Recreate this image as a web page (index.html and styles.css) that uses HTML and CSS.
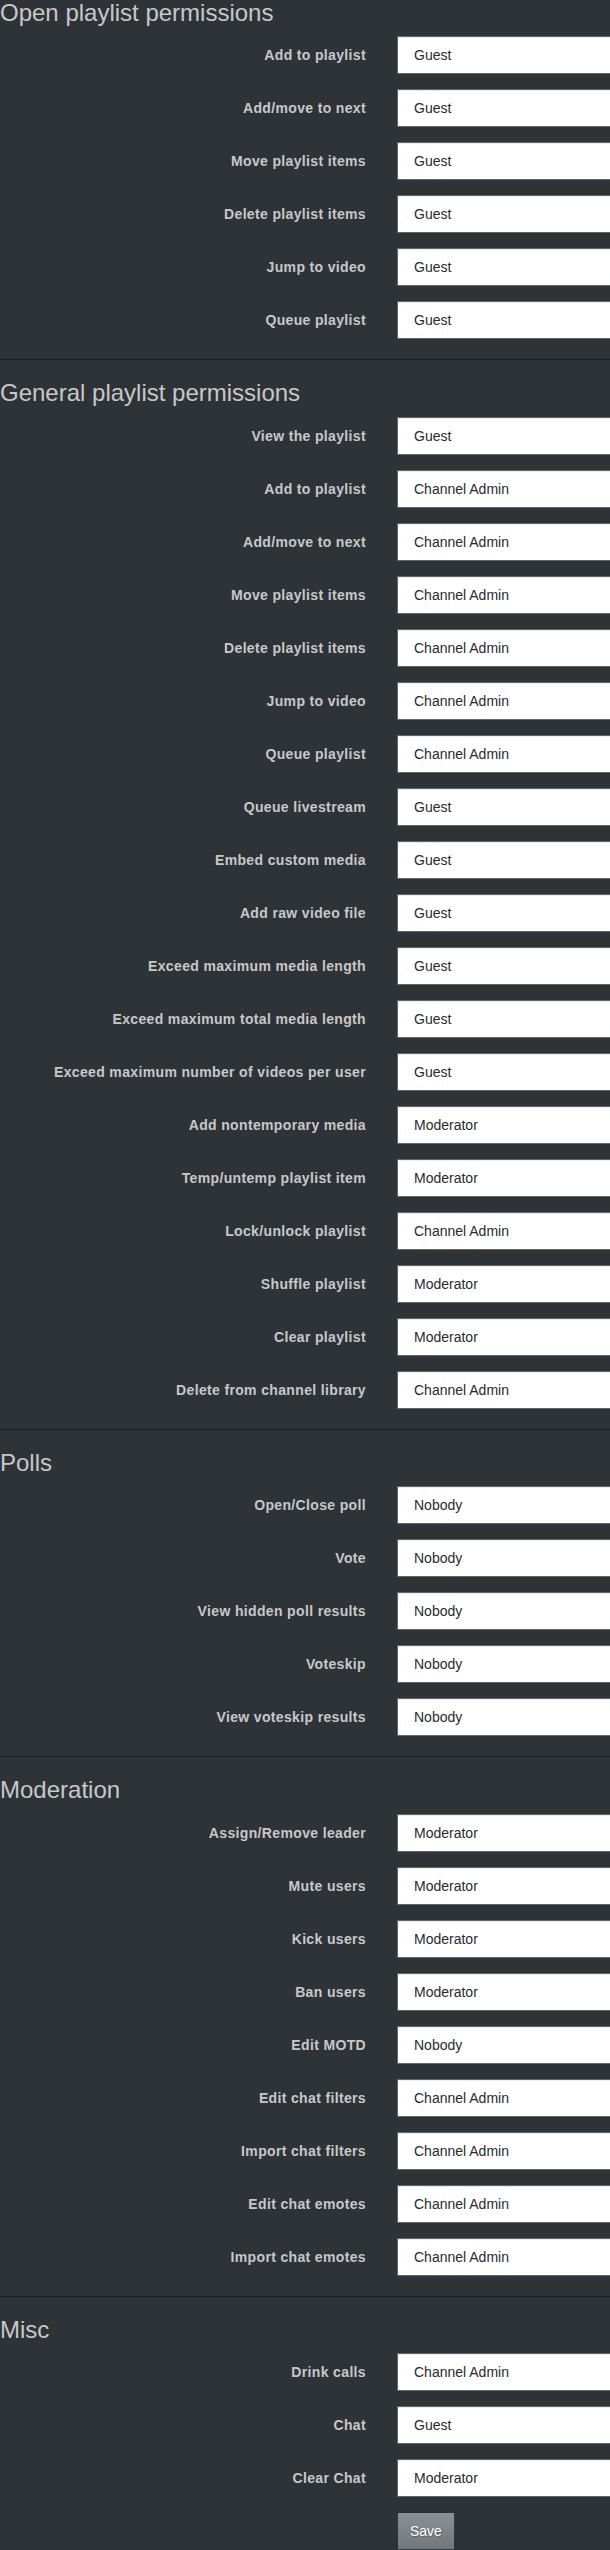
FILE: index.html
```html
<!DOCTYPE html>
<html lang="en">
<head>
<meta charset="utf-8">
<title>Channel permissions</title>
<link rel="stylesheet" href="styles.css">
</head>
<body>
<form class="perm-form">
  <section class="perm-section">
    <h3 class="section-title">Open playlist permissions</h3>
    <div class="form-row"><label class="row-label">Add to playlist</label><select class="perm-select"><option>Anonymous</option><option selected>Guest</option><option>Registered</option><option>Leader</option><option>Moderator</option><option>Channel Admin</option><option>Nobody</option></select></div>
    <div class="form-row"><label class="row-label">Add/move to next</label><select class="perm-select"><option>Anonymous</option><option selected>Guest</option><option>Registered</option><option>Leader</option><option>Moderator</option><option>Channel Admin</option><option>Nobody</option></select></div>
    <div class="form-row"><label class="row-label">Move playlist items</label><select class="perm-select"><option>Anonymous</option><option selected>Guest</option><option>Registered</option><option>Leader</option><option>Moderator</option><option>Channel Admin</option><option>Nobody</option></select></div>
    <div class="form-row"><label class="row-label">Delete playlist items</label><select class="perm-select"><option>Anonymous</option><option selected>Guest</option><option>Registered</option><option>Leader</option><option>Moderator</option><option>Channel Admin</option><option>Nobody</option></select></div>
    <div class="form-row"><label class="row-label">Jump to video</label><select class="perm-select"><option>Anonymous</option><option selected>Guest</option><option>Registered</option><option>Leader</option><option>Moderator</option><option>Channel Admin</option><option>Nobody</option></select></div>
    <div class="form-row"><label class="row-label">Queue playlist</label><select class="perm-select"><option>Anonymous</option><option selected>Guest</option><option>Registered</option><option>Leader</option><option>Moderator</option><option>Channel Admin</option><option>Nobody</option></select></div>
  </section>
  <hr class="divider">
  <section class="perm-section">
    <h3 class="section-title">General playlist permissions</h3>
    <div class="form-row"><label class="row-label">View the playlist</label><select class="perm-select"><option>Anonymous</option><option selected>Guest</option><option>Registered</option><option>Leader</option><option>Moderator</option><option>Channel Admin</option><option>Nobody</option></select></div>
    <div class="form-row"><label class="row-label">Add to playlist</label><select class="perm-select"><option>Anonymous</option><option>Guest</option><option>Registered</option><option>Leader</option><option>Moderator</option><option selected>Channel Admin</option><option>Nobody</option></select></div>
    <div class="form-row"><label class="row-label">Add/move to next</label><select class="perm-select"><option>Anonymous</option><option>Guest</option><option>Registered</option><option>Leader</option><option>Moderator</option><option selected>Channel Admin</option><option>Nobody</option></select></div>
    <div class="form-row"><label class="row-label">Move playlist items</label><select class="perm-select"><option>Anonymous</option><option>Guest</option><option>Registered</option><option>Leader</option><option>Moderator</option><option selected>Channel Admin</option><option>Nobody</option></select></div>
    <div class="form-row"><label class="row-label">Delete playlist items</label><select class="perm-select"><option>Anonymous</option><option>Guest</option><option>Registered</option><option>Leader</option><option>Moderator</option><option selected>Channel Admin</option><option>Nobody</option></select></div>
    <div class="form-row"><label class="row-label">Jump to video</label><select class="perm-select"><option>Anonymous</option><option>Guest</option><option>Registered</option><option>Leader</option><option>Moderator</option><option selected>Channel Admin</option><option>Nobody</option></select></div>
    <div class="form-row"><label class="row-label">Queue playlist</label><select class="perm-select"><option>Anonymous</option><option>Guest</option><option>Registered</option><option>Leader</option><option>Moderator</option><option selected>Channel Admin</option><option>Nobody</option></select></div>
    <div class="form-row"><label class="row-label">Queue livestream</label><select class="perm-select"><option>Anonymous</option><option selected>Guest</option><option>Registered</option><option>Leader</option><option>Moderator</option><option>Channel Admin</option><option>Nobody</option></select></div>
    <div class="form-row"><label class="row-label">Embed custom media</label><select class="perm-select"><option>Anonymous</option><option selected>Guest</option><option>Registered</option><option>Leader</option><option>Moderator</option><option>Channel Admin</option><option>Nobody</option></select></div>
    <div class="form-row"><label class="row-label">Add raw video file</label><select class="perm-select"><option>Anonymous</option><option selected>Guest</option><option>Registered</option><option>Leader</option><option>Moderator</option><option>Channel Admin</option><option>Nobody</option></select></div>
    <div class="form-row"><label class="row-label">Exceed maximum media length</label><select class="perm-select"><option>Anonymous</option><option selected>Guest</option><option>Registered</option><option>Leader</option><option>Moderator</option><option>Channel Admin</option><option>Nobody</option></select></div>
    <div class="form-row"><label class="row-label">Exceed maximum total media length</label><select class="perm-select"><option>Anonymous</option><option selected>Guest</option><option>Registered</option><option>Leader</option><option>Moderator</option><option>Channel Admin</option><option>Nobody</option></select></div>
    <div class="form-row"><label class="row-label">Exceed maximum number of videos per user</label><select class="perm-select"><option>Anonymous</option><option selected>Guest</option><option>Registered</option><option>Leader</option><option>Moderator</option><option>Channel Admin</option><option>Nobody</option></select></div>
    <div class="form-row"><label class="row-label">Add nontemporary media</label><select class="perm-select"><option>Anonymous</option><option>Guest</option><option>Registered</option><option>Leader</option><option selected>Moderator</option><option>Channel Admin</option><option>Nobody</option></select></div>
    <div class="form-row"><label class="row-label">Temp/untemp playlist item</label><select class="perm-select"><option>Anonymous</option><option>Guest</option><option>Registered</option><option>Leader</option><option selected>Moderator</option><option>Channel Admin</option><option>Nobody</option></select></div>
    <div class="form-row"><label class="row-label">Lock/unlock playlist</label><select class="perm-select"><option>Anonymous</option><option>Guest</option><option>Registered</option><option>Leader</option><option>Moderator</option><option selected>Channel Admin</option><option>Nobody</option></select></div>
    <div class="form-row"><label class="row-label">Shuffle playlist</label><select class="perm-select"><option>Anonymous</option><option>Guest</option><option>Registered</option><option>Leader</option><option selected>Moderator</option><option>Channel Admin</option><option>Nobody</option></select></div>
    <div class="form-row"><label class="row-label">Clear playlist</label><select class="perm-select"><option>Anonymous</option><option>Guest</option><option>Registered</option><option>Leader</option><option selected>Moderator</option><option>Channel Admin</option><option>Nobody</option></select></div>
    <div class="form-row"><label class="row-label">Delete from channel library</label><select class="perm-select"><option>Anonymous</option><option>Guest</option><option>Registered</option><option>Leader</option><option>Moderator</option><option selected>Channel Admin</option><option>Nobody</option></select></div>
  </section>
  <hr class="divider">
  <section class="perm-section">
    <h3 class="section-title">Polls</h3>
    <div class="form-row"><label class="row-label">Open/Close poll</label><select class="perm-select"><option>Anonymous</option><option>Guest</option><option>Registered</option><option>Leader</option><option>Moderator</option><option>Channel Admin</option><option selected>Nobody</option></select></div>
    <div class="form-row"><label class="row-label">Vote</label><select class="perm-select"><option>Anonymous</option><option>Guest</option><option>Registered</option><option>Leader</option><option>Moderator</option><option>Channel Admin</option><option selected>Nobody</option></select></div>
    <div class="form-row"><label class="row-label">View hidden poll results</label><select class="perm-select"><option>Anonymous</option><option>Guest</option><option>Registered</option><option>Leader</option><option>Moderator</option><option>Channel Admin</option><option selected>Nobody</option></select></div>
    <div class="form-row"><label class="row-label">Voteskip</label><select class="perm-select"><option>Anonymous</option><option>Guest</option><option>Registered</option><option>Leader</option><option>Moderator</option><option>Channel Admin</option><option selected>Nobody</option></select></div>
    <div class="form-row"><label class="row-label">View voteskip results</label><select class="perm-select"><option>Anonymous</option><option>Guest</option><option>Registered</option><option>Leader</option><option>Moderator</option><option>Channel Admin</option><option selected>Nobody</option></select></div>
  </section>
  <hr class="divider">
  <section class="perm-section">
    <h3 class="section-title">Moderation</h3>
    <div class="form-row"><label class="row-label">Assign/Remove leader</label><select class="perm-select"><option>Anonymous</option><option>Guest</option><option>Registered</option><option>Leader</option><option selected>Moderator</option><option>Channel Admin</option><option>Nobody</option></select></div>
    <div class="form-row"><label class="row-label">Mute users</label><select class="perm-select"><option>Anonymous</option><option>Guest</option><option>Registered</option><option>Leader</option><option selected>Moderator</option><option>Channel Admin</option><option>Nobody</option></select></div>
    <div class="form-row"><label class="row-label">Kick users</label><select class="perm-select"><option>Anonymous</option><option>Guest</option><option>Registered</option><option>Leader</option><option selected>Moderator</option><option>Channel Admin</option><option>Nobody</option></select></div>
    <div class="form-row"><label class="row-label">Ban users</label><select class="perm-select"><option>Anonymous</option><option>Guest</option><option>Registered</option><option>Leader</option><option selected>Moderator</option><option>Channel Admin</option><option>Nobody</option></select></div>
    <div class="form-row"><label class="row-label">Edit MOTD</label><select class="perm-select"><option>Anonymous</option><option>Guest</option><option>Registered</option><option>Leader</option><option>Moderator</option><option>Channel Admin</option><option selected>Nobody</option></select></div>
    <div class="form-row"><label class="row-label">Edit chat filters</label><select class="perm-select"><option>Anonymous</option><option>Guest</option><option>Registered</option><option>Leader</option><option>Moderator</option><option selected>Channel Admin</option><option>Nobody</option></select></div>
    <div class="form-row"><label class="row-label">Import chat filters</label><select class="perm-select"><option>Anonymous</option><option>Guest</option><option>Registered</option><option>Leader</option><option>Moderator</option><option selected>Channel Admin</option><option>Nobody</option></select></div>
    <div class="form-row"><label class="row-label">Edit chat emotes</label><select class="perm-select"><option>Anonymous</option><option>Guest</option><option>Registered</option><option>Leader</option><option>Moderator</option><option selected>Channel Admin</option><option>Nobody</option></select></div>
    <div class="form-row"><label class="row-label">Import chat emotes</label><select class="perm-select"><option>Anonymous</option><option>Guest</option><option>Registered</option><option>Leader</option><option>Moderator</option><option selected>Channel Admin</option><option>Nobody</option></select></div>
  </section>
  <hr class="divider">
  <section class="perm-section">
    <h3 class="section-title">Misc</h3>
    <div class="form-row"><label class="row-label">Drink calls</label><select class="perm-select"><option>Anonymous</option><option>Guest</option><option>Registered</option><option>Leader</option><option>Moderator</option><option selected>Channel Admin</option><option>Nobody</option></select></div>
    <div class="form-row"><label class="row-label">Chat</label><select class="perm-select"><option>Anonymous</option><option selected>Guest</option><option>Registered</option><option>Leader</option><option>Moderator</option><option>Channel Admin</option><option>Nobody</option></select></div>
    <div class="form-row"><label class="row-label">Clear Chat</label><select class="perm-select"><option>Anonymous</option><option>Guest</option><option>Registered</option><option>Leader</option><option selected>Moderator</option><option>Channel Admin</option><option>Nobody</option></select></div>
  </section>
  <div class="form-actions">
    <button type="button" class="btn-save">Save</button>
  </div>
</form>
</body>
</html>
```

FILE: styles.css
```css
html, body {
  margin: 0;
  padding: 0;
  background: #2e3338;
  overflow-x: hidden;
}

body {
  font-family: "Liberation Sans", Arial, Helvetica, sans-serif;
  font-size: 14px;
  line-height: 20px;
  color: #c8c8c8;
}

.perm-form {
  margin: 0;
}

.section-title {
  font-size: 24px;
  font-weight: 400;
  line-height: 26.4px;
  margin: 20px 0 10px;
  color: #c8c8c8;
}

.perm-section:first-child .section-title {
  margin-top: 0;
}

.form-row {
  display: grid;
  grid-template-columns: 366px 260px;
  column-gap: 31px;
  align-items: center;
  margin-bottom: 15px;
}

.row-label {
  text-align: right;
  font-weight: 700;
  color: #c8c8c8;
  white-space: nowrap;
  letter-spacing: 0.35px;
}

.perm-select {
  -webkit-appearance: none;
  appearance: none;
  box-sizing: border-box;
  width: 260px;
  height: 38px;
  margin: 0;
  padding: 8px 12px 8px 16px;
  border: 1px solid rgba(0, 0, 0, 0.6);
  border-radius: 0;
  background: #ffffff;
  color: #272b30;
  font-family: inherit;
  font-size: 14px;
  line-height: 20px;
  box-shadow: inset 0 1px 1px rgba(0, 0, 0, 0.075);
}

.divider {
  height: 0;
  margin: 20px 0;
  border: 0;
  border-top: 1px solid #1c1e22;
}

.form-actions {
  display: grid;
  grid-template-columns: 366px auto;
  column-gap: 31px;
  justify-items: start;
}

.btn-save {
  grid-column: 2;
  box-sizing: border-box;
  height: 38px;
  padding: 8px 12px;
  border: 1px solid rgba(0, 0, 0, 0.6);
  border-radius: 0;
  background: linear-gradient(#8a9196, #7a8288 60%, #70787d);
  color: #ffffff;
  font-family: inherit;
  font-size: 14px;
  line-height: 20px;
  text-shadow: 1px 1px 1px rgba(0, 0, 0, 0.3);
  cursor: pointer;
}
```
